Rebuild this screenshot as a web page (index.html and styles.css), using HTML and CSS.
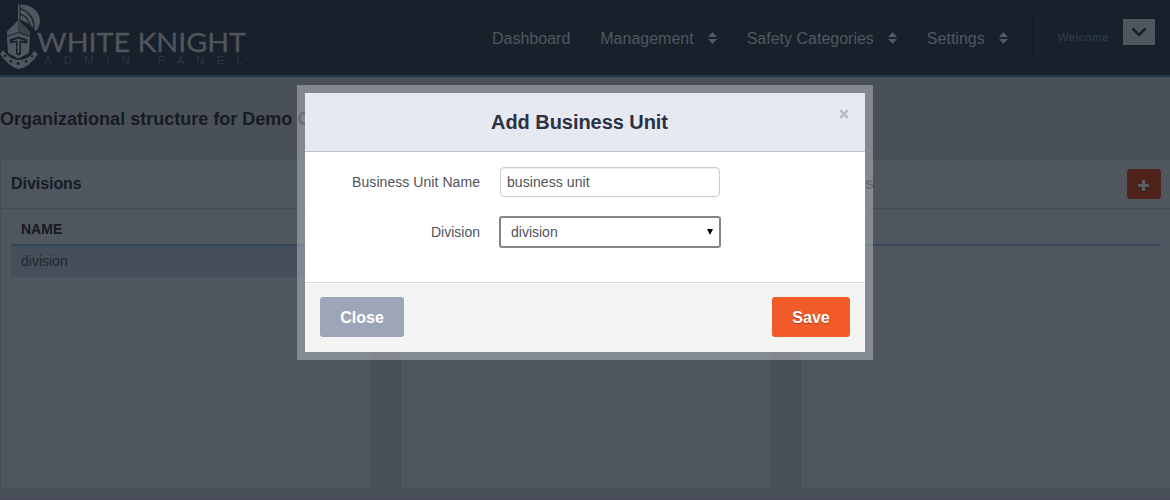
FILE: index.html
```html
<!DOCTYPE html>
<html lang="en">
<head>
<meta charset="utf-8">
<title>White Knight Admin Panel</title>
<link rel="stylesheet" href="styles.css">
</head>
<body>
<header class="topbar">
  <svg class="logo" width="250" height="75" viewBox="0 0 250 75">
    <g class="logo-knight">
      <path d="M18 4h1.500v18H18z"/>
      <path d="M20.500 4.500C31 4 40 12 40 20Q40 27 36 31L34.500 30Q36 14 20.500 8z"/>
      <path d="M20.500 9.500Q33 14 33.500 28L30.500 25Q29 17 20.500 13.500z"/>
      <path d="M20.500 15Q27 17 29 24L20.500 19.500z"/>
      <path d="M18.500 20L7 31.500V36L18.500 32z"/>
      <path class="logo-shade" d="M18.500 20L30 31.500V36L18.500 32z"/>
      <path d="M18.500 33L30 37L29 53L18.500 58.500L8 53L7 37z"/>
      <path class="logo-cut" d="M9.500 39.500L18.500 36.500L27.500 39.500L27 43.500L21 42.500V54L18.500 55.500L16 54V42.500L10 43.500z"/>
      <path d="M11.500 41L18.500 38.800L25.500 41L19.500 40.800V53h-2V40.800z"/>
      <path fill-rule="evenodd" d="M3 50L7 55Q13 60 19 60Q26 60 31 55L34 51L38 54Q29 68 18 69Q8 66 0 54zM5 54.500a1.300 1.300 0 1 0 .1 0zM11 60a1.400 1.400 0 1 0 .1 0zM18 62a1.500 1.500 0 1 0 .1 0zM26 60a1.400 1.400 0 1 0 .1 0zM32 55a1.300 1.300 0 1 0 .1 0z"/>
    </g>
    <text class="logo-name" x="37" y="52" textLength="209" lengthAdjust="spacingAndGlyphs">WHITE KNIGHT</text>
    <text class="logo-sub" x="44" y="64" textLength="199">ADMIN PANEL</text>
  </svg>
  <nav class="nav">
    <a class="nav-item">Dashboard</a>
    <a class="nav-item nav-wide">Management <svg class="sort" width="9" height="12"><path d="M4.500 0L9 5H0zM0 7H9L4.500 12z"/></svg></a>
    <a class="nav-item">Safety Categories <svg class="sort" width="9" height="12"><path d="M4.500 0L9 5H0zM0 7H9L4.500 12z"/></svg></a>
    <a class="nav-item">Settings <svg class="sort" width="9" height="12"><path d="M4.500 0L9 5H0zM0 7H9L4.500 12z"/></svg></a>
  </nav>
  <div class="user">
    <svg class="dots" width="2" height="38"><path d="M1 0V38"/></svg>
    <span class="welcome">Welcome</span>
    <span class="user-toggle"><svg width="16" height="10"><path d="M1.500 1.500L8 8L14.500 1.500"/></svg></span>
  </div>
</header>
<main>
  <h1 class="page-title">Organizational structure for Demo Company</h1>
  <div class="panels">
    <section class="panel">
      <div class="panel-head"><h2>Divisions</h2></div>
      <div class="panel-body">
        <div class="col-name">NAME</div>
        <div class="row">division</div>
      </div>
    </section>
    <section class="panel">
      <div class="panel-head"></div>
      <div class="panel-body"><div class="col-name"></div></div>
    </section>
    <section class="panel">
      <div class="panel-head"><h2>Projects</h2><span class="add"><svg width="12" height="12"><path class="add-shade" d="M4 1h3v4h4v3H7v4H4V8H0V5h4z"/><path class="add-plus" d="M4 0h3v4h4v3H7v4H4V7H0V4h4z"/></svg></span></div>
      <div class="panel-body"><div class="col-name"></div></div>
    </section>
  </div>
</main>
<div class="modal">
  <div class="modal-head">
    <h3>Add Business Unit</h3>
    <svg class="modal-close" width="10" height="10"><path d="M1.200 1.200L8.800 8.800M8.800 1.200L1.200 8.800"/></svg>
  </div>
  <div class="modal-body">
    <div class="field"><label class="label-wide">Business Unit Name</label><div class="input">business unit</div></div>
    <div class="field"><label>Division</label><div class="select"><span>division</span><svg width="6" height="6"><path d="M0 0H6L3 6z"/></svg></div></div>
  </div>
  <div class="modal-foot">
    <button class="btn btn-close">Close</button>
    <button class="btn btn-save">Save</button>
  </div>
</div>
</body>
</html>
```
FILE: styles.css
```css
* { box-sizing: border-box; }
html, body { height: 500px; overflow: hidden; }
body {
  margin: 0;
  background: #4a5058;
  font: 14px/20px "Liberation Sans", Arial, sans-serif;
  border-bottom: 1px solid #494858;
}
h1, h2, h3 { margin: 0; }

.topbar {
  display: flex;
  height: 77px;
  background: #17202b;
  border-bottom: 2px solid #1b3a4e;
}
.logo { flex: none; overflow: visible; }
.logo-knight { fill: #50565e; }
.logo-shade { fill: #3c434c; }
.logo-cut { fill: #17202b; }
.logo-name { font: 26.5px Lato, sans-serif; fill: #50555b; stroke: #50555b; stroke-width: .3; }
.logo-sub { font: 11.5px "Liberation Sans", Arial, sans-serif; fill: #2a3542; }
.nav { display: flex; gap: 30px; margin-left: 242px; padding-top: 29px; }
.nav-item { display: flex; font-size: 16px; line-height: 20px; color: #51575e; white-space: nowrap; }
.sort { margin: 3px 0 0 14px; fill: #535862; }
.user { display: flex; margin-left: 24px; }
.dots { margin-top: 19px; }
.dots path { stroke: #101722; stroke-width: 2; stroke-dasharray: 2 2; }
.welcome { margin: 27px 0 0 24px; font-size: 11.5px; letter-spacing: .5px; color: #324050; width: 65px; }
.user-toggle {
  display: flex;
  justify-content: center;
  width: 32px;
  height: 26px;
  margin-top: 19px;
  padding-top: 8px;
  background: #50565e;
}
.user-toggle path { fill: none; stroke: #17202c; stroke-width: 2.6; }

.page-title { padding: 32px 0 29px; height: 82px; font-size: 18px; line-height: 21px; letter-spacing: .01px; color: #171b21; white-space: nowrap; }
.panels { display: grid; grid-template-columns: 372px 372px 372px; gap: 28px; height: 331px; }
.panel { border: 1px solid #454d58; background: #4f565d; }
.panel-head {
  display: flex;
  justify-content: space-between;
  height: 49px;
  padding: 9px 10px 0;
  border-bottom: 1px solid #454d58;
}
.panel-head h2 { padding-top: 5px; font-size: 16px; line-height: 20px; letter-spacing: -.05px; color: #131c28; }
.add { display: flex; align-items: center; justify-content: center; width: 34px; height: 30px; padding-top: 4px; border-radius: 4px; background: #4e231c; }
.add-shade { fill: #301714; }
.add-plus { fill: #5b6067; }
.panel-body { padding: 0 10px; }
.col-name { height: 37px; padding: 10px 10px 0; border-bottom: 2px solid #33465b; font-weight: bold; color: #171b21; }
.row { height: 31px; padding: 5px 10px; background: #454f59; color: #1f262e; }

.modal {
  position: absolute;
  left: 297px;
  top: 85px;
  width: 576px;
  height: 275px;
  border: 8px solid rgba(189, 194, 206, .49);
  background: #fff padding-box;
}
.modal-head {
  position: relative;
  height: 59px;
  padding-top: 17px;
  border-bottom: 1px solid #bec2d0;
  background: #e7e9f2;
  text-align: center;
}
.modal-head h3 { padding-right: 11px; font-size: 20px; line-height: 24px; letter-spacing: -.05px; color: #2b3242; }
.modal-close { position: absolute; right: 16px; top: 16px; }
.modal-close path { stroke: #b8bac2; stroke-width: 2.6; }
.modal-body { display: flex; flex-direction: column; gap: 19px; height: 130px; padding-top: 15px; color: #4f5357; }
.field { display: flex; align-items: center; }
.field label { width: 175px; margin-right: 20px; text-align: right; }
.field .label-wide { letter-spacing: .06px; }
.input { width: 220px; height: 30px; padding: 4px 6px; border: 1px solid #ccc; border-radius: 4px; box-shadow: inset 0 1px 1px rgba(0, 0, 0, .075); letter-spacing: .08px; }
.select {
  display: flex;
  align-items: center;
  justify-content: space-between;
  width: 222px;
  height: 32px;
  margin-left: -1px;
  padding: 0 6px 0 10px;
  border: 2px solid #858585;
  border-radius: 3px;
}
.modal-foot {
  display: flex;
  justify-content: space-between;
  height: 70px;
  padding: 14px 15px 0;
  border-top: 1px solid #ddd;
  background: #f4f4f4;
  box-shadow: inset 0 1px 0 #fff;
}
.btn { height: 40px; padding: 2px 0 0; border: 0; border-radius: 3px; font: bold 16px/20px "Liberation Sans", Arial, sans-serif; color: #fff; }
.btn-close { width: 84px; background: #9ca6b8; }
.btn-save { width: 78px; background: #f15b2a; text-shadow: 0 1px 1px rgba(0, 0, 0, .35); }
```
